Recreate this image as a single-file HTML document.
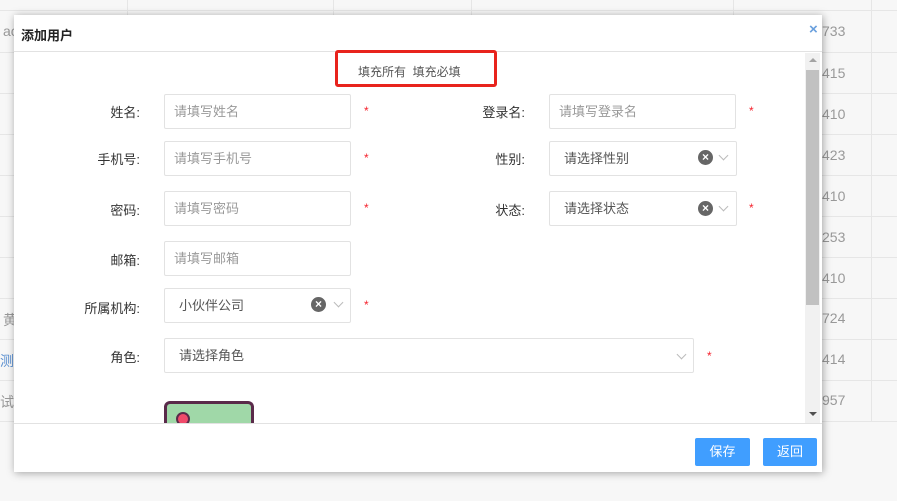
<!DOCTYPE html>
<html><head><meta charset="utf-8"><style>
*{box-sizing:border-box;margin:0;padding:0}
body{width:897px;height:501px;overflow:hidden;background:#f7f7f7;font-family:"Liberation Sans","Noto Sans CJK SC",sans-serif;position:relative;font-size:14px}
.a{position:absolute}
.hl{position:absolute;left:0;width:897px;height:1px;background:#e6e6e6}
.vl{position:absolute;top:0;width:1px;height:422px;background:#e6e6e6}
.num{position:absolute;left:822px;color:#999;font-size:14px}
.lbl{position:absolute;font-size:13px;color:#333;text-align:right;width:100px}
.inp{position:absolute;height:35px;border:1px solid #e2e2e2;background:#fff;border-radius:2px;color:#999;font-size:13px;padding-left:9px;line-height:34px}
.sel{color:#555;padding-left:14px}
.star{position:absolute;color:#f5222d;font-size:12px}
.x{position:absolute;width:15px;height:15px;border-radius:50%;background:#666;color:#fff;font-size:12px;line-height:15px;text-align:center;font-weight:bold}
.chev{position:absolute;width:7px;height:7px;border-right:1.5px solid #bbb;border-bottom:1.5px solid #bbb;transform:rotate(45deg)}
.btn{position:absolute;top:438px;height:28px;background:#409eff;color:#fff;border-radius:2px;font-size:13px;text-align:center;line-height:28px}
</style></head><body>
<div class="hl" style="top:10px"></div><div class="hl" style="top:52px"></div><div class="hl" style="top:93px"></div><div class="hl" style="top:134px"></div><div class="hl" style="top:175px"></div><div class="hl" style="top:216px"></div><div class="hl" style="top:257px"></div><div class="hl" style="top:298px"></div><div class="hl" style="top:339px"></div><div class="hl" style="top:380px"></div><div class="hl" style="top:421px"></div>
<div class="vl" style="left:127px"></div><div class="vl" style="left:333px"></div><div class="vl" style="left:471px"></div><div class="vl" style="left:733px"></div><div class="vl" style="left:871px"></div>
<div class="num" style="top:23px">733</div><div class="num" style="top:65px">415</div><div class="num" style="top:106px">410</div><div class="num" style="top:147px">423</div><div class="num" style="top:188px">410</div><div class="num" style="top:229px">253</div><div class="num" style="top:270px">410</div><div class="num" style="top:310px">724</div><div class="num" style="top:351px">414</div><div class="num" style="top:392px">957</div>
<div class="a" style="left:3px;top:23px;color:#999">ac</div>
<div class="a" style="left:3px;top:310px;color:#999">黄</div>
<div class="a" style="left:0px;top:351px;color:#5a8fd0">测</div>
<div class="a" style="left:0px;top:392px;color:#999">试</div>

<div class="a" style="left:14px;top:15px;width:808px;height:457px;background:#fff;box-shadow:1px 1px 8px rgba(0,0,0,.35)">
 <div class="a" style="left:0;top:0;width:808px;height:37px;border-bottom:1px solid #e2e2e2"></div>
 <div class="a" style="left:7px;top:10px;font-size:13px;color:#222;font-weight:bold">添加用户</div>
 <div class="a" style="left:795px;top:6px;color:#6aa0dd;font-size:15px;font-weight:bold">×</div>
 <div class="a" style="left:791px;top:38px;width:15px;height:370px;background:#f1f1f1"></div>
 <div class="a" style="left:792px;top:55px;width:13px;height:235px;background:#c1c1c1"></div>
 <div class="a" style="left:795px;top:43px;border:4px solid transparent;border-bottom:4px solid #a3a3a3;border-top:0"></div>
 <div class="a" style="left:795px;top:397px;border:4px solid transparent;border-top:4px solid #505050;border-bottom:0"></div>
 <div class="a" style="left:0;top:408px;width:808px;height:1px;background:#e2e2e2"></div>
</div>
<div class="a" style="left:335px;top:50px;width:162px;height:37px;border:3px solid #e8231d;border-radius:3px"></div>
<div class="a" style="left:358px;top:63px;font-size:12px;color:#555">填充所有&nbsp;&nbsp;填充必填</div>

<div class="lbl" style="left:40px;top:102px">姓名:</div>
<div class="inp" style="left:164px;top:94px;width:187px">请填写姓名</div>
<div class="star" style="left:364px;top:104px">*</div>
<div class="lbl" style="left:425px;top:102px">登录名:</div>
<div class="inp" style="left:549px;top:94px;width:187px">请填写登录名</div>
<div class="star" style="left:749px;top:104px">*</div>

<div class="lbl" style="left:40px;top:149px">手机号:</div>
<div class="inp" style="left:164px;top:141px;width:187px">请填写手机号</div>
<div class="star" style="left:364px;top:151px">*</div>
<div class="lbl" style="left:425px;top:149px">性别:</div>
<div class="inp sel" style="left:549px;top:141px;width:188px">请选择性别</div>
<div class="x" style="left:698px;top:150px">×</div><div class="chev" style="left:720px;top:152px"></div>

<div class="lbl" style="left:40px;top:200px">密码:</div>
<div class="inp" style="left:164px;top:191px;width:187px">请填写密码</div>
<div class="star" style="left:364px;top:201px">*</div>
<div class="lbl" style="left:425px;top:200px">状态:</div>
<div class="inp sel" style="left:549px;top:191px;width:188px">请选择状态</div>
<div class="x" style="left:698px;top:201px">×</div><div class="chev" style="left:720px;top:203px"></div>
<div class="star" style="left:749px;top:201px">*</div>

<div class="lbl" style="left:40px;top:250px">邮箱:</div>
<div class="inp" style="left:164px;top:241px;width:187px">请填写邮箱</div>

<div class="lbl" style="left:40px;top:298px">所属机构:</div>
<div class="inp sel" style="left:164px;top:288px;width:187px">小伙伴公司</div>
<div class="x" style="left:311px;top:297px">×</div><div class="chev" style="left:335px;top:299px"></div>
<div class="star" style="left:364px;top:298px">*</div>

<div class="lbl" style="left:40px;top:347px">角色:</div>
<div class="inp sel" style="left:164px;top:338px;width:530px">请选择角色</div>
<div class="chev" style="left:678px;top:351px"></div>
<div class="star" style="left:707px;top:349px">*</div>

<div class="a" style="left:164px;top:401px;width:90px;height:22px;background:#a0d8a8;border:3px solid #5a2a4a;border-bottom:none;border-radius:6px 6px 0 0;overflow:hidden">
 <div class="a" style="left:9px;top:8px;width:14px;height:14px;border-radius:50%;background:#f04a6a;border:2px solid #5a2a4a"></div>
</div>

<div class="btn" style="left:695px;width:55px">保存</div>
<div class="btn" style="left:763px;width:54px">返回</div>
</body></html>
